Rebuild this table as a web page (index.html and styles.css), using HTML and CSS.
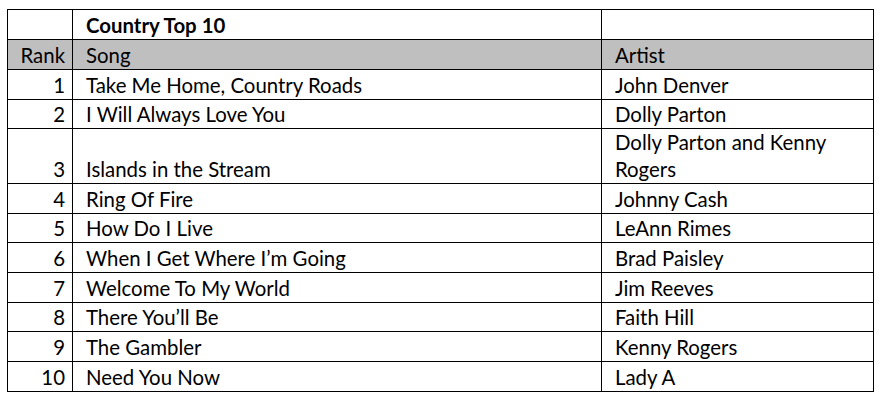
FILE: index.html
```html
<!DOCTYPE html>
<html>
<head>
<meta charset="utf-8">
<link rel="stylesheet" href="styles.css">
</head>
<body>
<table class="sheet">
  <colgroup>
    <col class="c-rank">
    <col class="c-song">
    <col class="c-artist">
  </colgroup>
  <tr class="r-title"><td></td><td class="title">Country Top 10</td><td></td></tr>
  <tr class="r-head"><td class="num">Rank</td><td>Song</td><td>Artist</td></tr>
  <tr class="r1"><td class="num">1</td><td>Take Me Home, Country Roads</td><td>John Denver</td></tr>
  <tr class="r2"><td class="num">2</td><td>I Will Always Love You</td><td>Dolly Parton</td></tr>
  <tr class="r3"><td class="num">3</td><td>Islands in the Stream</td><td>Dolly Parton and Kenny<br>Rogers</td></tr>
  <tr class="r"><td class="num">4</td><td>Ring Of Fire</td><td>Johnny Cash</td></tr>
  <tr class="r"><td class="num">5</td><td>How Do I Live</td><td>LeAnn Rimes</td></tr>
  <tr class="r"><td class="num">6</td><td>When I Get Where I’m Going</td><td>Brad Paisley</td></tr>
  <tr class="r"><td class="num">7</td><td>Welcome To My World</td><td>Jim Reeves</td></tr>
  <tr class="r"><td class="num">8</td><td>There You’ll Be</td><td>Faith Hill</td></tr>
  <tr class="r"><td class="num">9</td><td>The Gambler</td><td>Kenny Rogers</td></tr>
  <tr class="r"><td class="num">10</td><td>Need You Now</td><td>Lady A</td></tr>
</table>
</body>
</html>
```
FILE: styles.css
```css
html, body {
  margin: 0;
  padding: 0;
  background: #ffffff;
}
body {
  padding: 9px 0 0 7px;
  font-family: Lato, "Open Sans", sans-serif;
  font-size: 20.4px;
  color: #000;
}
.sheet {
  border-collapse: collapse;
  table-layout: fixed;
  width: 866px;
}
.c-rank { width: 65px; }
.c-song { width: 529px; }
.c-artist { width: 272px; }
.sheet td {
  border: 1px solid #000;
  padding: 0 0 0 13px;
  vertical-align: bottom;
  line-height: 27px;
  white-space: nowrap;
}
.sheet td.num {
  text-align: right;
  padding: 0 7px 0 0;
}
.title { font-weight: bold; }
.r-title td { height: 29px; }
.r-head td { background: #bfbfbf; height: 29px; }
.r1 td { height: 29px; }
.r2 td { height: 28px; }
.r3 td { height: 54px; }
.r td { height: 28.7px; }
```
